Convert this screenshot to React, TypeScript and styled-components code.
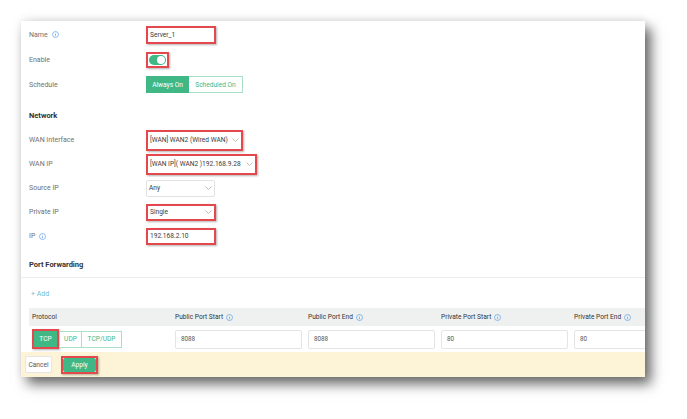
import React, { FC, PropsWithChildren } from 'react';
import styled, { createGlobalStyle } from 'styled-components';

const GlobalStyle = createGlobalStyle`
  body {
    margin: 0;
    background: #ffffff;
    font-family: Roboto, "Liberation Sans", Arial, sans-serif;
  }
`;

const GREEN = '#3fb886';
const RED = '#e3484d';

const Page = styled.div`
  width: 687px;
  height: 419px;
  padding: 21px 0 0 21px;
  box-sizing: border-box;
`;

const Panel = styled.div`
  width: 624px;
  height: 356px;
  background: #ffffff;
  display: flex;
  flex-direction: column;
  overflow: hidden;
  box-shadow: 6px 7px 12px rgba(0, 0, 0, 0.6), 0 -2px 8px rgba(0, 0, 0, 0.07);
`;

const Form = styled.div`
  padding: 1px 0 0 8px;
  display: flex;
  flex-direction: column;
`;

const Row = styled.div<{ $h: number }>`
  display: grid;
  grid-template-columns: 117px 1fr;
  align-items: center;
  height: ${(p) => p.$h}px;
`;

const Label = styled.span`
  display: inline-flex;
  align-items: center;
  gap: 4px;
  font-size: 7px;
  color: #707070;
`;

const SectionTitle = styled.div<{ $top: number }>`
  padding: ${(p) => p.$top}px 0 6px;
  font-size: 7.5px;
  line-height: 12px;
  font-weight: 700;
  color: #333333;
`;

const Highlight = styled.span`
  display: inline-flex;
  border: 2px solid ${RED};
  box-shadow: 1px 1px 2px rgba(0, 0, 0, 0.3);
  background: #ffffff;
`;

const Field = styled.span<{ $w: number; $h: number; $bare?: boolean }>`
  display: inline-flex;
  align-items: center;
  justify-content: space-between;
  gap: 2px;
  box-sizing: border-box;
  width: ${(p) => p.$w}px;
  height: ${(p) => p.$h}px;
  padding: 0 2px 0 2px;
  border: ${(p) => (p.$bare ? 'none' : '1px solid #e2e2e2')};
  border-radius: 2px;
  font-size: 6.6px;
  color: #3a3a3a;
  white-space: nowrap;
  overflow: hidden;
  & > svg {
    flex-shrink: 0;
  }
`;

const FieldSlot = styled.div`
  display: flex;
  align-items: center;
`;

const Toggle = styled.span`
  display: inline-flex;
  align-items: center;
  justify-content: flex-end;
  width: 17px;
  height: 10px;
  margin: 1px;
  padding: 1px;
  box-sizing: border-box;
  border-radius: 6px;
  background: ${GREEN};
  &::after {
    content: '';
    width: 8px;
    height: 8px;
    border-radius: 50%;
    background: #ffffff;
  }
`;

const Segment = styled.div`
  display: inline-flex;
  align-items: center;
`;

const SegButton = styled.span<{ $on?: boolean; $w: number; $h: number }>`
  display: inline-flex;
  align-items: center;
  justify-content: center;
  box-sizing: border-box;
  width: ${(p) => p.$w}px;
  height: ${(p) => p.$h}px;
  font-size: 6.6px;
  color: ${(p) => (p.$on ? '#ffffff' : GREEN)};
  background: ${(p) => (p.$on ? GREEN : '#ffffff')};
  border: 1px solid ${(p) => (p.$on ? GREEN : '#a9dfc7')};
  & + & {
    border-left: none;
  }
`;

const Divider = styled.div`
  height: 1px;
  background: #ececec;
`;

const AddLink = styled.div`
  padding: 10px 0 8px 10px;
  font-size: 7px;
  line-height: 12px;
  color: #74bcd0;
`;

const Table = styled.div`
  margin-left: 8px;
  display: grid;
  grid-template-columns: 143px repeat(4, 133px);
`;

const HeadCell = styled.div`
  display: flex;
  align-items: center;
  gap: 3px;
  height: 18px;
  padding: 0 3px;
  background: #eff1f1;
  font-size: 6.6px;
  color: #333333;
  white-space: nowrap;
`;

const BodyCell = styled.div`
  display: flex;
  align-items: center;
  height: 26px;
  padding: 0 3px;
`;

const PortInput = styled.span`
  display: flex;
  align-items: center;
  box-sizing: border-box;
  width: 127px;
  height: 19px;
  padding: 0 5px;
  border: 1px solid #e4e4e4;
  border-radius: 2px;
  font-size: 6.3px;
  color: #555555;
`;

const Footer = styled.div`
  display: flex;
  align-items: center;
  gap: 9px;
  height: 25px;
  padding-left: 4px;
  background: #fdf4d7;
`;

const Button = styled.span<{ $primary?: boolean }>`
  display: inline-flex;
  align-items: center;
  justify-content: center;
  box-sizing: border-box;
  height: ${(p) => (p.$primary ? 14 : 17)}px;
  width: ${(p) => (p.$primary ? 33 : 27)}px;
  font-size: 6.6px;
  color: ${(p) => (p.$primary ? '#ffffff' : '#555555')};
  background: ${(p) => (p.$primary ? GREEN : '#ffffff')};
  border: ${(p) => (p.$primary ? 'none' : '1px solid #e6e6e6')};
  border-radius: 2px;
`;

const InfoIcon: FC = () => (
  <svg width="7" height="7" viewBox="0 0 14 14">
    <circle cx="7" cy="7" r="6" fill="none" stroke="#5fa2e4" strokeWidth="1.4" />
    <circle cx="7" cy="4.2" r="0.9" fill="#5fa2e4" />
    <line x1="7" y1="6" x2="7" y2="10.3" stroke="#5fa2e4" strokeWidth="1.5" />
  </svg>
);

const Chevron: FC = () => (
  <svg width="7" height="4" viewBox="0 0 14 8">
    <polyline points="1,1 7,7 13,1" fill="none" stroke="#9a9a9a" strokeWidth="1.3" />
  </svg>
);

const FormRow: FC<PropsWithChildren<{ label: string; info?: boolean; h: number }>> = ({
  label,
  info,
  h,
  children,
}) => (
  <Row $h={h}>
    <Label>
      {label}
      {info && <InfoIcon />}
    </Label>
    <FieldSlot>{children}</FieldSlot>
  </Row>
);

const columns = ['Public Port Start', 'Public Port End', 'Private Port Start', 'Private Port End'];
const values = ['8088', '8088', '80', '80'];

const App: FC = () => (
  <Page>
    <GlobalStyle />
    <Panel>
      <Form>
        <FormRow label="Name" info h={25}>
          <Highlight>
            <Field $w={66} $h={14} $bare>
              Server_1
            </Field>
          </Highlight>
        </FormRow>
        <FormRow label="Enable" h={25}>
          <Highlight>
            <Toggle />
          </Highlight>
        </FormRow>
        <FormRow label="Schedule" h={25}>
          <Segment>
            <SegButton $on $w={43} $h={17}>
              Always On
            </SegButton>
            <SegButton $w={54} $h={17}>
              Scheduled On
            </SegButton>
          </Segment>
        </FormRow>

        <SectionTitle $top={13}>Network</SectionTitle>
        <FormRow label="WAN Interface" h={24}>
          <Highlight>
            <Field $w={93} $h={17} $bare>
              [WAN] WAN2 (Wired WAN) <Chevron />
            </Field>
          </Highlight>
        </FormRow>
        <FormRow label="WAN IP" h={24}>
          <Highlight>
            <Field $w={107} $h={17} $bare>
              [WAN IP]( WAN2 )192.168.9.28 <Chevron />
            </Field>
          </Highlight>
        </FormRow>
        <FormRow label="Source IP" h={24}>
          <Field $w={69} $h={17}>
            Any <Chevron />
          </Field>
        </FormRow>
        <FormRow label="Private IP" h={24}>
          <Highlight>
            <Field $w={66} $h={13} $bare>
              Single <Chevron />
            </Field>
          </Highlight>
        </FormRow>
        <FormRow label="IP" info h={24}>
          <Highlight>
            <Field $w={66} $h={13} $bare>
              192.168.2.10
            </Field>
          </Highlight>
        </FormRow>

        <SectionTitle $top={11}>Port Forwarding</SectionTitle>
      </Form>
      <Divider />
      <AddLink>+ Add</AddLink>
      <Table>
        <HeadCell>Protocol</HeadCell>
        {columns.map((c) => (
          <HeadCell key={c}>
            {c} <InfoIcon />
          </HeadCell>
        ))}
        <BodyCell>
          <Segment>
            <Highlight>
              <SegButton $on $w={23} $h={16}>
                TCP
              </SegButton>
            </Highlight>
            <SegButton $w={23} $h={17}>
              UDP
            </SegButton>
            <SegButton $w={40} $h={17}>
              TCP/UDP
            </SegButton>
          </Segment>
        </BodyCell>
        {values.map((v, i) => (
          <BodyCell key={i}>
            <PortInput>{v}</PortInput>
          </BodyCell>
        ))}
      </Table>
      <Footer>
        <Button>Cancel</Button>
        <Highlight>
          <Button $primary>Apply</Button>
        </Highlight>
      </Footer>
    </Panel>
  </Page>
);

export default App;
